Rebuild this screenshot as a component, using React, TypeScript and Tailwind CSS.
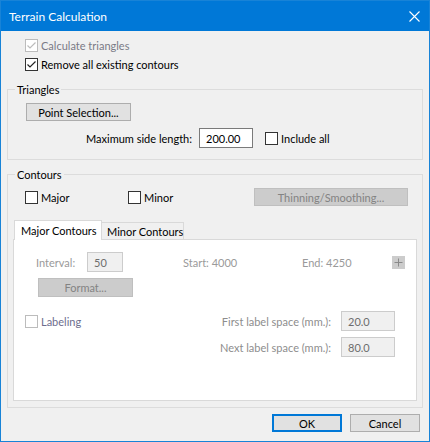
import React from "react";

const font = { fontFamily: "Lato, 'Liberation Sans', sans-serif" };

function Check({ checked = false, disabled = false }: { checked?: boolean; disabled?: boolean }) {
  return (
    <span
      className={
        "flex h-[13px] w-[13px] shrink-0 items-center justify-center border bg-white " +
        (disabled ? "border-[#bcbcbc]" : "border-[#333333]")
      }
    >
      {checked && (
        <svg width="11" height="11" viewBox="0 0 11 11">
          <path d="M1.5 5.5 L4 8 L9.5 2.5" fill="none" stroke={disabled ? "#bcbcbc" : "#222"} strokeWidth="1.2" />
        </svg>
      )}
    </span>
  );
}

function CheckRow({ label, checked, disabled, muted }: { label: string; checked?: boolean; disabled?: boolean; muted?: string }) {
  return (
    <label className="flex items-center gap-[3px] whitespace-nowrap">
      <Check checked={checked} disabled={disabled} />
      <span className={muted ?? "text-black"}>{label}</span>
    </label>
  );
}

function Btn({ children, className, disabled }: { children: React.ReactNode; className: string; disabled?: boolean }) {
  return (
    <button
      type="button"
      className={
        "flex items-center justify-center whitespace-nowrap border leading-none " +
        (disabled ? "border-[#bfbfbf] bg-[#cccccc] text-[#838383] " : "border-[#adadad] bg-[#e1e1e1] text-black ") +
        className
      }
    >
      {children}
    </button>
  );
}

function Field({ value, disabled, className }: { value: string; disabled?: boolean; className: string }) {
  return (
    <div
      className={
        "flex items-center border pl-[6px] " +
        (disabled ? "border-[#cccccc] bg-[#f0f0f0] text-[#6d6d6d] " : "border-[#7a7a7a] bg-white text-black ") +
        className
      }
    >
      {value}
    </div>
  );
}

export default function App() {
  return (
    <div
      style={font}
      className="flex h-[442px] w-[430px] flex-col border border-[#1883d7] bg-[#f0f0f0] text-[11px] leading-[13px] text-black"
    >
      {/* title bar */}
      <div className="flex h-[30px] shrink-0 items-center justify-between bg-[#0078d7] pl-[8px] pr-[9px] text-white">
        <span className="text-[12px]">Terrain Calculation</span>
        <svg width="11" height="11" viewBox="0 0 11 11">
          <path d="M0.5 0.5 L10.5 10.5 M10.5 0.5 L0.5 10.5" stroke="white" strokeWidth="1.1" />
        </svg>
      </div>

      <div className="flex flex-col pl-[24px] pt-[8px]">
        <CheckRow label="Calculate triangles" checked disabled muted="text-[#7a7a86]" />
        <div className="mt-[6px]">
          <CheckRow label="Remove all existing contours" checked />
        </div>
      </div>

      {/* Triangles group */}
      <fieldset className="mx-[6px] mt-[12px] h-[77px] border border-[#dcdcdc] px-0 pb-0">
        <legend className="ml-[7px] px-[2px] leading-[13px]">Triangles</legend>
        <div className="flex flex-col pl-[18px] pt-[7px]">
          <Btn className="h-[18px] w-[105px]">Point Selection...</Btn>
          <div className="mt-[7px] flex items-center">
            <span className="w-[166px] text-right">Maximum side length:</span>
            <Field value="200.00" className="ml-[7px] h-[20px] w-[54px]" />
            <div className="ml-[12px]">
              <CheckRow label="Include all" />
            </div>
          </div>
        </div>
      </fieldset>

      {/* Contours group */}
      <fieldset className="mx-[6px] mt-[8px] h-[240px] border border-[#dcdcdc] px-0 pb-0">
        <legend className="ml-[7px] px-[2px] leading-[13px]">Contours</legend>
        <div className="flex items-center pt-[7px]">
          <div className="ml-[17px] w-[103px]">
            <CheckRow label="Major" />
          </div>
          <div className="w-[126px]">
            <CheckRow label="Minor" />
          </div>
          <Btn disabled className="h-[18px] w-[154px]">
            Thinning/Smoothing...
          </Btn>
        </div>

        {/* tabs */}
        <div className="mt-[14px] flex items-end pl-[6px]">
          <div className="relative z-10 -mb-px flex h-[20px] w-[88px] items-center whitespace-nowrap border border-b-0 border-[#d9d9d9] bg-white pl-[6px]">
            Major Contours
          </div>
          <div className="flex h-[17px] w-[82px] items-center whitespace-nowrap border border-b-0 border-l-0 border-[#d9d9d9] bg-[#f0f0f0] pl-[5px]">
            Minor Contours
          </div>
        </div>
        <div className="mx-[5px] flex h-[162px] flex-col border border-[#d9d9d9] bg-white">
          <div className="mt-[12px] flex items-center">
            <span className="ml-[22px] w-[51px] text-[#9a9a9a]">Interval:</span>
            <Field value="50" disabled className="h-[20px] w-[36px]" />
            <span className="ml-[60px] w-[119px] text-[#9a9a9a]">Start: 4000</span>
            <span className="w-[90px] text-[#9a9a9a]">End: 4250</span>
            <span className="flex h-[13px] w-[13px] items-center justify-center bg-[#cccccc]">
              <svg width="9" height="9" viewBox="0 0 9 9">
                <path d="M4.5 0.5 V8.5 M0.5 4.5 H8.5" stroke="#8a8a8a" strokeWidth="1" />
              </svg>
            </span>
          </div>
          <Btn disabled className="ml-[24px] mt-[6px] h-[19px] w-[95px]">
            Format...
          </Btn>
          <div className="mt-[14px] flex items-center">
            <div className="ml-[11px] w-[179px]">
              <CheckRow label="Labeling" disabled muted="text-[#6d6d8d]" />
            </div>
            <span className="w-[127px] whitespace-nowrap text-right text-[#8d8d8d]">First label space (mm.):</span>
            <Field value="20.0" disabled className="ml-[10px] h-[20px] w-[54px]" />
          </div>
          <div className="mt-[6px] flex items-center">
            <span className="ml-[190px] w-[127px] whitespace-nowrap text-right text-[#8d8d8d]">Next label space (mm.):</span>
            <Field value="80.0" disabled className="ml-[10px] h-[20px] w-[54px]" />
          </div>
        </div>
      </fieldset>

      {/* footer */}
      <div className="mt-[6px] flex justify-end gap-[8px] pr-[9px]">
        <button type="button" className="flex h-[18px] w-[70px] items-center justify-center border-2 border-[#0078d7] bg-[#e1e1e1] leading-none">
          OK
        </button>
        <Btn className="h-[18px] w-[70px]">Cancel</Btn>
      </div>
    </div>
  );
}
